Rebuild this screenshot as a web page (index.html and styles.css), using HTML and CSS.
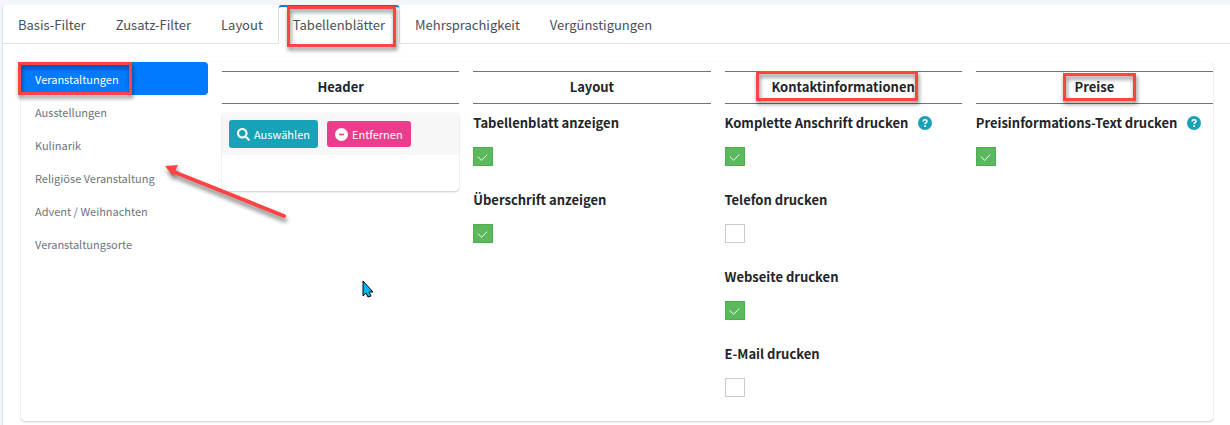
FILE: index.html
```html
<!DOCTYPE html>
<html lang="de">
<head>
<meta charset="utf-8">
<title>Tabellenblätter</title>
<link rel="stylesheet" href="styles.css">
</head>
<body>

    <main class="card">
        <nav class="tabs">
            <a class="tab" href="#basis">Basis-Filter</a>
            <a class="tab" href="#zusatz">Zusatz-Filter</a>
            <a class="tab" href="#layout">Layout</a>
            <a class="tab active" href="#blaetter">Tabellenblätter<span class="mark mark-tab"></span></a>
            <a class="tab" href="#sprachen">Mehrsprachigkeit</a>
            <a class="tab" href="#rabatte">Vergünstigungen</a>
        </nav>

        <div class="panel">
            <nav class="side">
                <a class="side-link active" href="#veranstaltungen">Veranstaltungen<span class="mark mark-side"></span></a>
                <a class="side-link" href="#ausstellungen">Ausstellungen</a>
                <a class="side-link" href="#kulinarik">Kulinarik</a>
                <a class="side-link" href="#religion">Religiöse Veranstaltung</a>
                <a class="side-link" href="#advent">Advent / Weihnachten</a>
                <a class="side-link" href="#orte">Veranstaltungsorte</a>
            </nav>

            <div class="columns">
                <section>
                    <h2>Header</h2>
                    <div class="picker">
                        <div class="picker-bar">
                            <button type="button" class="btn btn-info">
                                <svg class="icon" viewBox="0 0 512 512"><path fill="currentColor" d="M505 442.7L405.300 343c-4.500-4.500-10.600-7-17-7H372c27.600-35.300 44-79.700 44-128C416 93.100 322.900 0 208 0S0 93.100 0 208s93.100 208 208 208c48.300 0 92.700-16.400 128-44v16.300c0 6.400 2.500 12.500 7 17l99.700 99.700c9.400 9.400 24.600 9.400 33.900 0l28.300-28.300c9.400-9.400 9.400-24.600.1-34zM208 336c-70.700 0-128-57.200-128-128 0-70.700 57.200-128 128-128 70.700 0 128 57.200 128 128 0 70.700-57.200 128-128 128z"/></svg>
                                Auswählen
                            </button>
                            <button type="button" class="btn btn-pink">
                                <svg class="icon" viewBox="0 0 16 16"><circle cx="8" cy="8" r="8" fill="currentColor"/><path d="M5 8h6" stroke="#e83e8c" stroke-width="2"/></svg>
                                Entfernen
                            </button>
                        </div>
                    </div>
                </section>

                <section>
                    <h2>Layout</h2>
                    <div class="field">
                        <label for="blatt">Tabellenblatt anzeigen</label>
                        <input id="blatt" type="checkbox" checked>
                    </div>
                    <div class="field">
                        <label for="titel">Überschrift anzeigen</label>
                        <input id="titel" type="checkbox" checked>
                    </div>
                </section>

                <section>
                    <h2>Kontaktinformationen<span class="mark mark-contact"></span></h2>
                    <div class="field">
                        <label for="anschrift">Komplette Anschrift drucken
                            <svg class="help" viewBox="0 0 14 14"><circle cx="7" cy="7" r="7" fill="#17a2b8"/><path d="M5 5.500C5.100 4.200 6 3.700 7 3.700c1.200 0 2 .6 2 1.600C9 6.500 7.100 6.700 7.100 8" fill="none" stroke="#fff" stroke-width="1.500"/><circle cx="7.100" cy="10" r="1" fill="#fff"/></svg>
                        </label>
                        <input id="anschrift" type="checkbox" checked>
                    </div>
                    <div class="field">
                        <label for="telefon">Telefon drucken</label>
                        <input id="telefon" type="checkbox">
                    </div>
                    <div class="field">
                        <label for="webseite">Webseite drucken</label>
                        <input id="webseite" type="checkbox" checked>
                    </div>
                    <div class="field">
                        <label for="email">E-Mail drucken</label>
                        <input id="email" type="checkbox">
                    </div>
                </section>

                <section>
                    <h2>Preise<span class="mark mark-price"></span></h2>
                    <div class="field">
                        <label for="preis">Preisinformations-Text drucken
                            <svg class="help" viewBox="0 0 14 14"><circle cx="7" cy="7" r="7" fill="#17a2b8"/><path d="M5 5.500C5.100 4.200 6 3.700 7 3.700c1.200 0 2 .6 2 1.600C9 6.500 7.100 6.700 7.100 8" fill="none" stroke="#fff" stroke-width="1.500"/><circle cx="7.100" cy="10" r="1" fill="#fff"/></svg>
                        </label>
                        <input id="preis" type="checkbox" checked>
                    </div>
                </section>
            </div>
        </div>
    </main>

    <svg class="arrow" viewBox="0 0 124 56"><path d="M9 7L119 51" stroke="#fd4343" stroke-width="4" stroke-linecap="round"/><path d="M0 1L13 0L8 11Z" fill="#fd4343"/></svg>
    <svg class="pointer" viewBox="0 0 12 18"><path d="M1 1v15l3-3 2 4 3-1-2-4h4z" fill="#00b7f5" stroke="#000" stroke-width="1"/></svg>

</body>
</html>
```

FILE: styles.css
```css
* {
    box-sizing: border-box;
}

body {
    display: flex;
    min-height: 100vh;
    margin: 0;
    padding: 5px 0 0 2px;
    background: #f2f5fa;
    color: #212529;
    font-family: "Noto Sans CJK SC", "Noto Sans", sans-serif;
    font-size: 13px;
    line-height: 20px;
}

a {
    text-decoration: none;
}

.card {
    flex: 1;
    border-left: 1px solid #dee2e6;
    border-top-left-radius: 4px;
    background: #fff;
}

/* Top tabs */
.tabs {
    display: flex;
    border-bottom: 1px solid #dee2e6;
}

.tab {
    position: relative;
    margin-bottom: -1px;
    padding: 8px 14px;
    border: 1px solid transparent;
    border-top-width: 2px;
    color: #495057;
}

.tab.active {
    border-color: #007bff #dee2e6 #fff;
    border-radius: 4px 4px 0 0;
    background: #fff;
}

/* Inner panel: side navigation and option columns */
.panel {
    display: flex;
    gap: 14px;
    min-height: 359px;
    margin: 18px 17px 4px 18px;
    border-radius: 4px;
    box-shadow: 0 0 1px rgba(0, 0, 0, .15), 0 1px 2px rgba(0, 0, 0, .2);
}

.side {
    flex: 0 0 187px;
}

.side-link {
    display: block;
    position: relative;
    padding: 7px 14px 6px;
    border-radius: 4px;
    color: #6c757d;
    font-size: 11px;
}

.side-link.active {
    background: #007bff;
    color: #fff;
}

.columns {
    flex: 1;
    display: grid;
    grid-template-columns: repeat(4, 1fr);
    gap: 14px;
    padding-top: 9px;
}

h2 {
    position: relative;
    margin: 0 0 9px;
    padding: 5px 0 6px;
    border: solid #6c757d;
    border-width: 1px 0;
    font-size: 13px;
    text-align: center;
}

.picker {
    height: 78px;
    border-radius: 4px;
    box-shadow: 0 0 1px rgba(0, 0, 0, .15), 0 1px 2px rgba(0, 0, 0, .2);
}

.picker-bar {
    display: flex;
    align-items: center;
    gap: 9px;
    padding: 7px;
    background: #f7f7f7;
}

.btn {
    display: flex;
    align-items: center;
    gap: 4px;
    height: 28px;
    padding: 0 8px;
    border: 0;
    border-radius: 3px;
    color: #fff;
    font-family: inherit;
    font-size: 11px;
}

.btn-info {
    background: #17a2b8;
}

.btn-pink {
    height: 26px;
    background: #e83e8c;
}

.icon {
    width: 13px;
    height: 13px;
}

.field {
    height: 77px;
}

.field label {
    display: flex;
    align-items: center;
    gap: 10px;
    margin-bottom: 14px;
    font-weight: bold;
}

.field input {
    display: block;
    appearance: none;
    width: 20px;
    height: 19px;
    margin: 0;
    border: 1px solid #cecbc6;
    background: #fff;
}

.field input:checked {
    border-color: #4cae4c;
    background: #5cb85c url("data:image/svg+xml,%3Csvg xmlns='http://www.w3.org/2000/svg' viewBox='0 0 18 18'%3E%3Cpath d='M4 9l4 4 6-6' fill='none' stroke='white'/%3E%3C/svg%3E");
}

.help {
    width: 14px;
    height: 14px;
}

/* Red annotation frames, arrow and mouse pointer */
.mark {
    position: absolute;
    border: 3px solid #fd4343;
    filter: drop-shadow(1px 3px 2px rgba(0, 0, 0, .5));
    z-index: 1;
}

.mark-tab {
    inset: -1px 3px -4px 8px;
}

.mark-side {
    left: -3px;
    top: 0;
    width: 114px;
    height: 33px;
}

.mark-contact {
    left: 31px;
    right: 44px;
    top: -1px;
    bottom: 2px;
}

.mark-price {
    left: 87px;
    right: 77px;
    top: 1px;
    bottom: 2px;
}

.arrow {
    position: absolute;
    left: 165px;
    top: 165px;
    width: 124px;
    height: 56px;
    overflow: visible;
    filter: drop-shadow(1px 4px 2px rgba(0, 0, 0, .5));
}

.pointer {
    position: absolute;
    left: 362px;
    top: 280px;
    width: 12px;
    height: 18px;
}
```
